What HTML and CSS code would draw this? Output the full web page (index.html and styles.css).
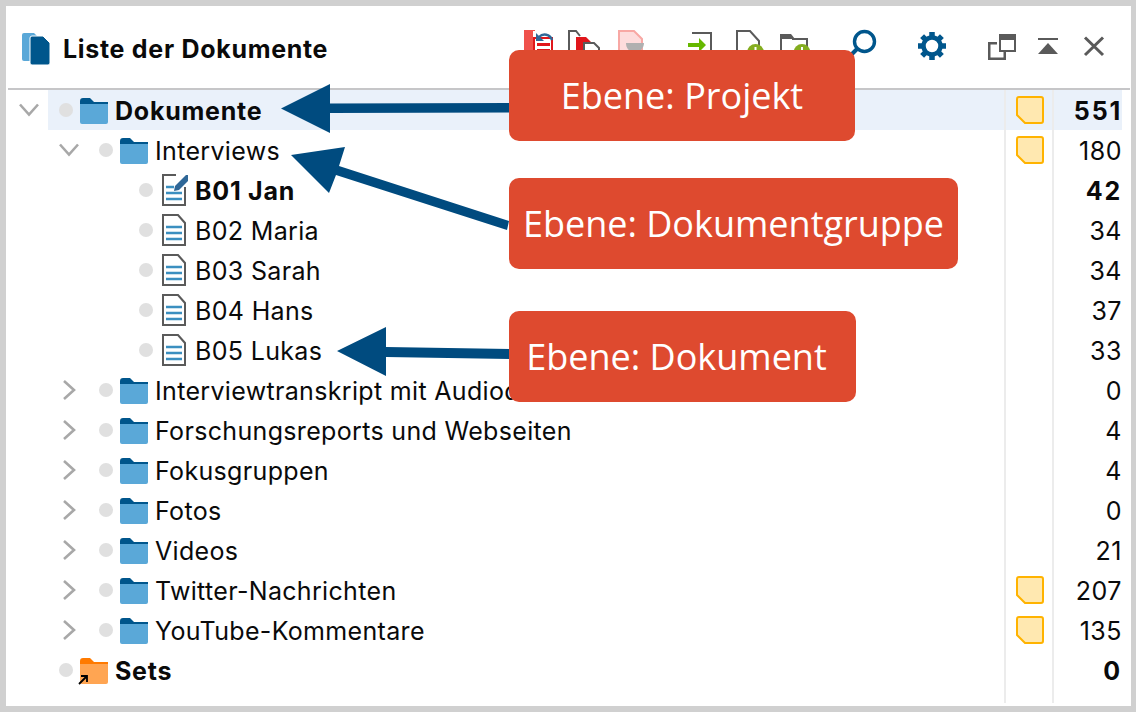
FILE: index.html
```html
<!DOCTYPE html>
<html lang="de">
<head>
<meta charset="utf-8">
<title>Liste der Dokumente</title>
<link rel="stylesheet" href="styles.css">
</head>
<body>
<svg class="sprite" aria-hidden="true">
  <symbol id="folder" viewBox="0 0 28 26">
    <path d="M0 8V3a3 3 0 0 1 3-3h7l4 4h14v5H0z" fill="#00568c"/>
    <path d="M0 6h28v18a2 2 0 0 1-2 2H2a2 2 0 0 1-2-2z" fill="#5aa8d8"/>
  </symbol>
  <symbol id="folder-set" viewBox="0 0 28 26">
    <path d="M0 8V3a3 3 0 0 1 3-3h7l4 4h14v5H0z" fill="#ff7a00"/>
    <path d="M0 6h28v18a2 2 0 0 1-2 2H2a2 2 0 0 1-2-2z" fill="#ffa552"/>
  </symbol>
  <symbol id="doc" viewBox="0 0 28 32">
    <path d="M3 1h15l7 8v22H3z" fill="#fff" stroke="#5a5a5a" stroke-width="2"/>
    <path d="M6 13h16M6 19h16M6 25h16" stroke="#3b8fc0" stroke-width="2.400" fill="none"/>
  </symbol>
  <symbol id="doc-edit" viewBox="0 0 28 32">
    <path d="M25 13v18H3V1h13" fill="#fff" stroke="#5a5a5a" stroke-width="2"/>
    <path d="M6 13h8M6 19h16M6 25h16" stroke="#3b8fc0" stroke-width="2.400" fill="none"/>
    <path d="M14 17l1-5L26 1l4 0 0 4L19 16z" fill="#2f6797"/>
  </symbol>
  <symbol id="note" viewBox="0 0 28 28">
    <path d="M3 1h22a2 2 0 0 1 2 2v22a2 2 0 0 1-2 2H9l-8-8V3a2 2 0 0 1 2-2z" fill="#ffe8b0" stroke="#ffb300" stroke-width="2"/>
  </symbol>
  <symbol id="chev-down" viewBox="0 0 20 14">
    <path d="M1 1.500 10 11.500 19 1.500" fill="none" stroke="#a8a8a8" stroke-width="2.600"/>
  </symbol>
  <symbol id="chev-right" viewBox="0 0 20 20">
    <path d="M5 1 15 10 5 19" fill="none" stroke="#a8a8a8" stroke-width="2.600"/>
  </symbol>
</svg>

<div class="stage">
  <main class="panel">
    <header class="head">
      <svg class="logo" viewBox="0 0 28 32">
        <path d="M0 2a2 2 0 0 1 2-2h10l4 4v24H2a2 2 0 0 1-2-2z" fill="#5aa8d8"/>
        <path d="M8 5a2 2 0 0 1 2-2h11l7 7v20a2 2 0 0 1-2 2H10a2 2 0 0 1-2-2z" fill="#00568c" stroke="#fff" stroke-width="1"/>
      </svg>
      <h1 class="title">Liste der Dokumente</h1>
      <div class="tools">
        <div class="tool-group">
          <svg class="tool" viewBox="515 27 46 44">
            <path d="M524 30h11v26h-11z" fill="#f0524c"/>
            <path d="M533 31h5l5 5h10v20h-20z" fill="#fff"/>
            <path d="M534 38h18v18h-18z" fill="none" stroke="#e0161b" stroke-width="2"/>
            <path d="M537 43h13v3h-13zM537 49h13v3h-13z" fill="#e0161b"/>
            <path d="M539 37c4-4 11-3 13 3" fill="none" stroke="#2f6797" stroke-width="2.400"/>
            <path d="M536 33v8h8z" fill="#2f6797"/>
          </svg>
          <svg class="tool" viewBox="561 27 46 44">
            <path d="M569 56V31h7l4 5" fill="none" stroke="#5a5a5a" stroke-width="2"/>
            <path d="M576 37h10l5 5v16h-15z" fill="#e0161b"/>
            <path d="M584 43h10l5 5v12h-15z" fill="#fff" stroke="#5a5a5a" stroke-width="2"/>
          </svg>
          <svg class="tool" viewBox="607 27 46 44">
            <path d="M619 31h15l8 8v20h-23z" fill="#fddcdc" stroke="#f8a8a4" stroke-width="2"/>
            <path d="M626 43h18c0 5-4 8-6 9v6h-6v-6c-3-1-6-4-6-9z" fill="#b0b0b0"/>
          </svg>
        </div>
        <div class="tool-group">
          <svg class="tool" viewBox="675 27 46 44">
            <path d="M690 33h19v26" fill="none" stroke="#5a5a5a" stroke-width="2"/>
            <path d="M686 43h11v-5l7 7-7 7v-5h-11z" fill="#66b800"/>
          </svg>
          <svg class="tool" viewBox="721 27 46 44">
            <path d="M735 58V31h13l9 10v18" fill="none" stroke="#5a5a5a" stroke-width="2"/>
            <circle cx="753.500" cy="52.500" r="8.500" fill="#84ad1f"/>
            <path d="M753.500 47v4" stroke="#fff" stroke-width="2"/>
          </svg>
          <svg class="tool" viewBox="767 27 46 44">
            <path d="M779 58V36" fill="none" stroke="#5a5a5a" stroke-width="2"/>
            <path d="M778 34h11l4 5h-15z" fill="#5a5a5a"/>
            <path d="M790 39h15v16" fill="none" stroke="#5a5a5a" stroke-width="2"/>
            <circle cx="800" cy="52.500" r="8.500" fill="#84ad1f"/>
            <path d="M800 47v4" stroke="#fff" stroke-width="2"/>
          </svg>
        </div>
        <svg class="tool" viewBox="841 27 46 44">
          <circle cx="866.500" cy="41.500" r="10" fill="none" stroke="#00568c" stroke-width="3.400"/>
          <path d="M859 49l-9 9" stroke="#00568c" stroke-width="4"/>
        </svg>
        <svg class="tool" viewBox="909 27 46 44">
          <g stroke="#00568c" stroke-width="5.500">
            <path d="M932 32v28M918 46h28M922.100 36.100l19.800 19.800M922.100 55.900l19.800-19.800"/>
          </g>
          <circle cx="932" cy="46" r="8.500" fill="#fff" stroke="#00568c" stroke-width="4.500"/>
        </svg>
        <div class="tool-group">
          <svg class="tool" viewBox="979 27 46 44">
            <path d="M997 43.250h-7.750v15.500h15.500v-7" fill="none" stroke="#5a5a5a" stroke-width="2.500"/>
            <path d="M1000 39h15v12h-15z" fill="#fff" stroke="#5a5a5a" stroke-width="2"/>
            <path d="M999 34h17v5h-17z" fill="#5a5a5a"/>
          </svg>
          <svg class="tool" viewBox="1025 27 46 44">
            <path d="M1038 38h20v2h-20z" fill="#5a5a5a"/>
            <path d="M1048 43l10 11h-20z" fill="#5a5a5a"/>
          </svg>
          <svg class="tool" viewBox="1071 27 46 44">
            <path d="M1085 37.500l18 17.500M1103 37.500l-18 17.500" fill="none" stroke="#5a5a5a" stroke-width="3"/>
          </svg>
        </div>
      </div>
    </header>

    <section class="tree">
      <div class="row">
        <div class="gutter"><svg class="chev-down"><use href="#chev-down"/></svg></div>
        <div class="row-main selected">
          <div class="node"><span class="dot"></span><svg class="folder"><use href="#folder"/></svg><span class="label strong">Dokumente</span></div>
          <div class="memo"><svg class="note"><use href="#note"/></svg></div>
          <div class="count total">551</div>
        </div>
      </div>
      <div class="row">
        <div class="gutter"></div>
        <div class="row-main">
          <div class="node"><svg class="chev-down group-chev"><use href="#chev-down"/></svg><span class="dot"></span><svg class="folder"><use href="#folder"/></svg><span class="label">Interviews</span></div>
          <div class="memo"><svg class="note"><use href="#note"/></svg></div>
          <div class="count">180</div>
        </div>
      </div>
      <div class="row">
        <div class="gutter"></div>
        <div class="row-main">
          <div class="node leaf"><span class="dot"></span><svg class="docicon"><use href="#doc-edit"/></svg><span class="label strong">B01 Jan</span></div>
          <div class="memo"></div>
          <div class="count total">42</div>
        </div>
      </div>
      <div class="row">
        <div class="gutter"></div>
        <div class="row-main">
          <div class="node leaf"><span class="dot"></span><svg class="docicon"><use href="#doc"/></svg><span class="label">B02 Maria</span></div>
          <div class="memo"></div>
          <div class="count">34</div>
        </div>
      </div>
      <div class="row">
        <div class="gutter"></div>
        <div class="row-main">
          <div class="node leaf"><span class="dot"></span><svg class="docicon"><use href="#doc"/></svg><span class="label">B03 Sarah</span></div>
          <div class="memo"></div>
          <div class="count">34</div>
        </div>
      </div>
      <div class="row">
        <div class="gutter"></div>
        <div class="row-main">
          <div class="node leaf"><span class="dot"></span><svg class="docicon"><use href="#doc"/></svg><span class="label">B04 Hans</span></div>
          <div class="memo"></div>
          <div class="count">37</div>
        </div>
      </div>
      <div class="row">
        <div class="gutter"></div>
        <div class="row-main">
          <div class="node leaf"><span class="dot"></span><svg class="docicon"><use href="#doc"/></svg><span class="label">B05 Lukas</span></div>
          <div class="memo"></div>
          <div class="count">33</div>
        </div>
      </div>
      <div class="row">
        <div class="gutter"></div>
        <div class="row-main">
          <div class="node"><svg class="chev-right group-chev"><use href="#chev-right"/></svg><span class="dot"></span><svg class="folder"><use href="#folder"/></svg><span class="label">Interviewtranskript mit Audiodateien</span></div>
          <div class="memo"></div>
          <div class="count">0</div>
        </div>
      </div>
      <div class="row">
        <div class="gutter"></div>
        <div class="row-main">
          <div class="node"><svg class="chev-right group-chev"><use href="#chev-right"/></svg><span class="dot"></span><svg class="folder"><use href="#folder"/></svg><span class="label">Forschungsreports und Webseiten</span></div>
          <div class="memo"></div>
          <div class="count">4</div>
        </div>
      </div>
      <div class="row">
        <div class="gutter"></div>
        <div class="row-main">
          <div class="node"><svg class="chev-right group-chev"><use href="#chev-right"/></svg><span class="dot"></span><svg class="folder"><use href="#folder"/></svg><span class="label">Fokusgruppen</span></div>
          <div class="memo"></div>
          <div class="count">4</div>
        </div>
      </div>
      <div class="row">
        <div class="gutter"></div>
        <div class="row-main">
          <div class="node"><svg class="chev-right group-chev"><use href="#chev-right"/></svg><span class="dot"></span><svg class="folder"><use href="#folder"/></svg><span class="label">Fotos</span></div>
          <div class="memo"></div>
          <div class="count">0</div>
        </div>
      </div>
      <div class="row">
        <div class="gutter"></div>
        <div class="row-main">
          <div class="node"><svg class="chev-right group-chev"><use href="#chev-right"/></svg><span class="dot"></span><svg class="folder"><use href="#folder"/></svg><span class="label">Videos</span></div>
          <div class="memo"></div>
          <div class="count">21</div>
        </div>
      </div>
      <div class="row">
        <div class="gutter"></div>
        <div class="row-main">
          <div class="node"><svg class="chev-right group-chev"><use href="#chev-right"/></svg><span class="dot"></span><svg class="folder"><use href="#folder"/></svg><span class="label">Twitter-Nachrichten</span></div>
          <div class="memo"><svg class="note"><use href="#note"/></svg></div>
          <div class="count">207</div>
        </div>
      </div>
      <div class="row">
        <div class="gutter"></div>
        <div class="row-main">
          <div class="node"><svg class="chev-right group-chev"><use href="#chev-right"/></svg><span class="dot"></span><svg class="folder"><use href="#folder"/></svg><span class="label">YouTube-Kommentare</span></div>
          <div class="memo"><svg class="note"><use href="#note"/></svg></div>
          <div class="count">135</div>
        </div>
      </div>
      <div class="row">
        <div class="gutter"></div>
        <div class="row-main">
          <div class="node"><span class="dot"></span><span class="set-wrap"><svg class="folder"><use href="#folder-set"/></svg><svg class="shortcut" viewBox="0 0 11 11"><path d="M1 10 8 3M3 2h6v6" fill="none" stroke="#000" stroke-width="1.800"/></svg></span><span class="label strong">Sets</span></div>
          <div class="memo"></div>
          <div class="count total">0</div>
        </div>
      </div>
      <div class="row row-end">
        <div class="gutter"></div>
        <div class="row-main">
          <div class="node"></div>
          <div class="memo"></div>
          <div class="count"></div>
        </div>
      </div>
    </section>
  </main>

  <svg class="arrows" viewBox="0 0 1136 712">
    <path d="M281 108.500 330 84V103.500L512 103V112.500L330 113V133z"/>
    <path d="M291 155 345 147 339 166 509 221 507 230 336 175 329 193z"/>
    <path d="M337 351 386 327V347L512 349V359L386 357V376z"/>
  </svg>

  <div class="callout callout-project">Ebene: Projekt</div>
  <div class="callout callout-group">Ebene: Dokumentgruppe</div>
  <div class="callout callout-doc">Ebene: Dokument</div>
</div>
</body>
</html>
```

FILE: styles.css
```css
* {
  box-sizing: border-box;
}

html,
body {
  margin: 0;
  padding: 0;
  background: #fff;
}

.sprite {
  display: none;
}

.stage {
  position: relative;
  width: 1136px;
  height: 712px;
  overflow: hidden;
  font-family: Inter, "Liberation Sans", sans-serif;
  color: #0a0a0a;
}

.panel {
  width: 100%;
  height: 100%;
  border: solid #d0d0d0;
  border-width: 6px 5px 6px 6px;
  padding: 0 1px 0 2px;
  background: #fff;
}

.head {
  display: flex;
  align-items: center;
  height: 84px;
  padding: 4px 13px 0 14px;
  border-bottom: 2px solid #c6c6c8;
}

.logo {
  width: 28px;
  height: 32px;
  flex: none;
}

.title {
  margin: 0 0 0 13px;
  font-size: 25px;
  font-weight: 700;
  letter-spacing: 0.7px;
  white-space: nowrap;
}

.tools {
  display: flex;
  align-items: center;
  margin-left: auto;
  gap: 24px;
}

.tool-group {
  display: flex;
  align-items: center;
}

.tool {
  display: block;
  width: 46px;
  height: 44px;
  flex: none;
}

.row {
  display: flex;
  height: 40px;
  margin-right: 8px;
}

.row-end {
  height: 13px;
}

.gutter {
  display: flex;
  align-items: center;
  flex: none;
  width: 40px;
  padding-left: 11px;
}

.row-main {
  display: flex;
  flex: 1;
  min-width: 0;
}

.selected {
  background: #eaf1fa;
}

.node {
  display: flex;
  align-items: center;
  flex: 1;
  min-width: 0;
  padding-left: 11px;
  gap: 7px;
}

.leaf {
  padding-left: 91px;
}

.group-chev {
  margin-right: 13px;
}

.chev-down {
  width: 20px;
  height: 14px;
  flex: none;
}

.chev-right {
  width: 20px;
  height: 20px;
  flex: none;
}

.dot {
  width: 14px;
  height: 14px;
  flex: none;
  border-radius: 50%;
  background: #e0e0e0;
}

.folder {
  width: 28px;
  height: 26px;
  margin-top: 2px;
  flex: none;
}

.docicon {
  width: 28px;
  height: 32px;
  flex: none;
}

.label {
  padding-top: 2px;
  font-size: 25px;
  letter-spacing: 0.33px;
  white-space: nowrap;
}

.strong {
  font-weight: 700;
  letter-spacing: 0.75px;
}

.set-wrap {
  position: relative;
  display: flex;
  flex: none;
}

.shortcut {
  position: absolute;
  left: -2px;
  bottom: -1px;
  width: 11px;
  height: 11px;
}

.memo {
  display: flex;
  align-items: center;
  flex: none;
  width: 50px;
  padding-left: 10px;
  border-left: 2px solid #ececec;
  border-right: 2px solid #ececec;
}

.note {
  width: 28px;
  height: 28px;
  flex: none;
}

.count {
  display: flex;
  align-items: center;
  justify-content: flex-end;
  flex: none;
  width: 68px;
  padding-top: 2px;
  font-size: 25px;
  letter-spacing: 0.5px;
}

.total {
  font-weight: 700;
  letter-spacing: 1.8px;
}

.arrows {
  position: absolute;
  top: 0;
  left: 0;
  width: 1136px;
  height: 712px;
  fill: #004b7f;
}

.callout {
  position: absolute;
  left: 509px;
  display: flex;
  align-items: center;
  justify-content: center;
  height: 91px;
  border-radius: 10px;
  background: #de4a2f;
  color: #fff;
  font-family: "Open Sans", sans-serif;
  font-size: 36px;
  white-space: nowrap;
}

.callout-project {
  top: 50px;
  width: 346px;
}

.callout-group {
  top: 178px;
  width: 449px;
}

.callout-doc {
  top: 311px;
  width: 347px;
  padding-right: 12px;
}
```
